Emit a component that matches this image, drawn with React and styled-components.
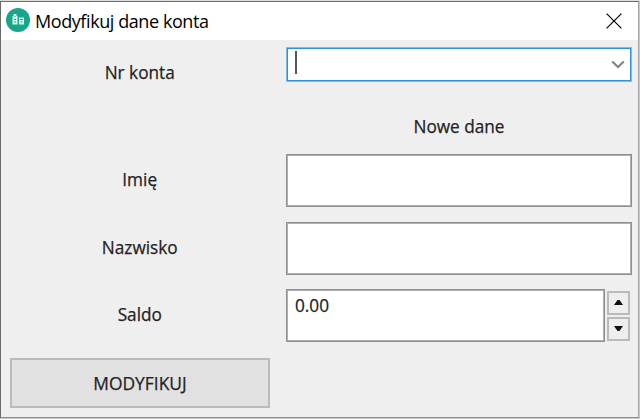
import React from "react";
import styled, { createGlobalStyle } from "styled-components";

const Global = createGlobalStyle`
  * { box-sizing: border-box; }
  body { margin: 0; background: #e3e5e4; overflow: hidden; }
`;

const Desktop = styled.div`
  width: 640px;
  height: 419px;
  padding-top: 1px;
  background: linear-gradient(#dcdfdd 0 1px, #c9c9c9 1px);
`;

const Dialog = styled.main`
  width: 639px;
  height: 417px;
  border: 1px solid #6b6b6b;
  border-right-color: #a4a4a4;
  border-bottom-color: #8e8e8e;
  background: #efefef;
  color: #222;
  font-family: "Open Sans", "Noto Sans", sans-serif;
  font-size: 18.5px;
  line-height: 24px;
`;

const TitleBar = styled.header`
  display: flex;
  align-items: center;
  height: 38px;
  padding: 0 16px 0 4px;
  background: #fff;
  color: #000;
`;

const AppIcon = styled.svg`
  width: 26px;
  height: 26px;
  margin: -2px 4px 0 0;
  flex: none;
`;

const Title = styled.h1`
  flex: 1;
  margin: 0;
  font-size: 18px;
  font-weight: 400;
  letter-spacing: -0.42px;
  white-space: nowrap;
`;

const Close = styled.button`
  display: flex;
  margin-top: -1px;
  padding: 0;
  border: 0;
  background: none;
`;

const Form = styled.form`
  display: grid;
  grid-template-columns: 260px 346px;
  grid-template-rows: 52px 55px 68px 67px 69px 50px;
  column-gap: 16px;
  padding: 7px 0 0 9px;
`;

const Text = styled.span`
  display: block;
  white-space: nowrap;
  -webkit-text-stroke: 0.25px currentColor;
  transform: scaleX(${(p) => p.$scale || 0.93});
  transform-origin: ${(p) => p.$origin || "center"};
`;

const Label = styled.label`
  display: flex;
  align-items: center;
  justify-content: center;
  height: ${(p) => p.$height || 50}px;
`;

const ColumnHead = styled.div`
  grid-column: 2;
  display: flex;
  align-items: center;
  justify-content: center;
  height: 54px;
`;

const Combo = styled.div`
  display: flex;
  align-items: center;
  justify-content: space-between;
  height: 35px;
  padding: 0 6px 0 8px;
  border: 1px solid #7dbcf0;
  box-shadow: inset 0 0 0 1px #3190de;
  background: #fff;
`;

const Caret = styled.i`
  width: 2px;
  height: 23px;
  margin-top: -4px;
  background: #555;
`;

const Field = styled.div`
  height: 53px;
  padding: 3px 8px;
  border: 1px solid #8f8f8f;
  box-shadow: inset 0 0 0 1px #b0b0b0;
  background: #fff;
`;

const SpinBox = styled.div`
  display: grid;
  grid-template-columns: 319px 23px;
  column-gap: 2px;
`;

const Steppers = styled.div`
  display: flex;
  flex-direction: column;
  gap: 2px;
  padding-top: 2px;
`;

const Step = styled.button`
  display: flex;
  align-items: center;
  justify-content: center;
  height: 24px;
  padding: 0 0 2px;
  border: 2px solid #bababa;
  background: #eee;
`;

const Submit = styled.button`
  padding: 0;
  border: 2px solid #bababa;
  background: #e1e1e1;
  color: #222;
  font: inherit;
`;

const textRows = ["Imię", "Nazwisko"];

export default function App() {
  return (
    <>
      <Global />
      <Desktop>
        <Dialog>
          <TitleBar>
            <AppIcon viewBox="0 0 26 26">
              <circle cx="13" cy="13" r="12" fill="#19a58b" />
              <path d="M7.5 9h1V7h3v2h1v8.5h-5zM14 10.5h5v7h-5z" fill="#d3f7ec" />
              <path
                d="M9.5 9.5h1M9 12.5h2M9 15h2M15 12.5h3M15.5 15h2"
                stroke="#19a58b"
              />
            </AppIcon>
            <Title>Modyfikuj dane konta</Title>
            <Close type="button" aria-label="Zamknij">
              <svg width="16" height="16" viewBox="0 0 16 16">
                <path d="M.6.6l14.8 14.8M15.4.6L.6 15.4" stroke="#000" strokeWidth="1.2" />
              </svg>
            </Close>
          </TitleBar>
          <Form>
            <Label>
              <Text>Nr konta</Text>
            </Label>
            <Combo>
              <Caret />
              <svg width="14" height="9" viewBox="0 0 14 9">
                <path d="M1.2 1.5L7 7l5.8-5.5" fill="none" stroke="#858585" strokeWidth="2.2" />
              </svg>
            </Combo>
            <ColumnHead>
              <Text>Nowe dane</Text>
            </ColumnHead>
            {textRows.map((name) => (
              <React.Fragment key={name}>
                <Label>
                  <Text>{name}</Text>
                </Label>
                <Field />
              </React.Fragment>
            ))}
            <Label>
              <Text>Saldo</Text>
            </Label>
            <SpinBox>
              <Field>
                <Text $origin="left">0.00</Text>
              </Field>
              <Steppers>
                <Step type="button" aria-label="Więcej">
                  <svg width="9" height="5"><path d="M0 5L3.5 0h2L9 5z" fill="#111" /></svg>
                </Step>
                <Step type="button" aria-label="Mniej">
                  <svg width="9" height="5"><path d="M0 0h9L5.5 5h-2z" fill="#111" /></svg>
                </Step>
              </Steppers>
            </SpinBox>
            <Submit type="button">
              <Text $scale={0.94}>MODYFIKUJ</Text>
            </Submit>
          </Form>
        </Dialog>
      </Desktop>
    </>
  );
}
